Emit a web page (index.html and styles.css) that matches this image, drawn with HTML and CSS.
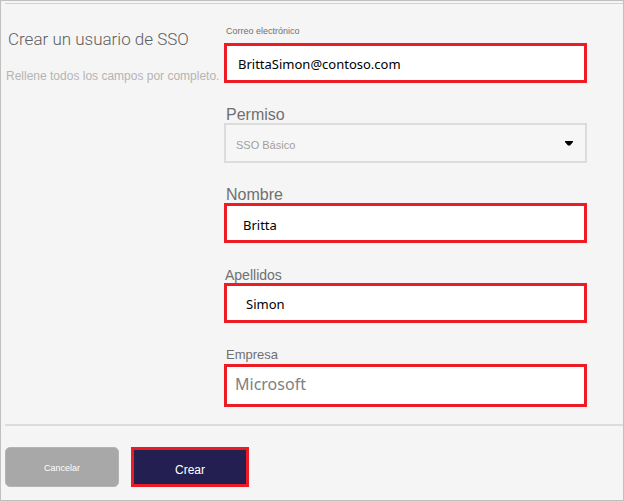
FILE: index.html
```html
<!DOCTYPE html>
<html lang="es">
<head>
<meta charset="utf-8">
<meta name="viewport" content="width=device-width, initial-scale=1">
<title>Crear un usuario de SSO</title>
<link rel="stylesheet" href="styles.css">
</head>
<body>
<form class="panel">
  <div class="content">
    <header class="intro">
      <h1 class="title">Crear un usuario de SSO</h1>
      <p class="hint">Rellene todos los campos por completo.</p>
    </header>
    <div class="fields">
      <div class="field">
        <label class="label label-small" for="email">Correo electrónico</label>
        <input class="control required" id="email" type="email" value="BrittaSimon@contoso.com">
      </div>
      <div class="field">
        <label class="label label-large" for="permission">Permiso</label>
        <div class="select-wrap">
          <select class="control select" id="permission">
            <option>SSO Básico</option>
          </select>
          <svg class="arrow" viewBox="0 0 8 5" aria-hidden="true"><path d="M0 0h8v1L5 4.500H3L0 1z"/></svg>
        </div>
      </div>
      <div class="field">
        <label class="label label-large" for="first-name">Nombre</label>
        <input class="control required name" id="first-name" type="text" value="Britta">
      </div>
      <div class="field">
        <label class="label label-medium" for="last-name">Apellidos</label>
        <input class="control required surname" id="last-name" type="text" value="Simon">
      </div>
      <div class="field">
        <label class="label label-compact" for="company">Empresa</label>
        <input class="control required company" id="company" type="text" value="Microsoft">
      </div>
    </div>
  </div>
  <footer class="actions">
    <button class="button cancel" type="button">Cancelar</button>
    <button class="button create" type="submit">Crear</button>
  </footer>
</form>
</body>
</html>
```
FILE: styles.css
```css
* {
  box-sizing: border-box;
}

body {
  margin: 0;
  background: #f5f5f5;
  font-family: "Liberation Sans", Arial, sans-serif;
  color: #707070;
}

.panel {
  display: flex;
  flex-direction: column;
  min-height: 100vh;
  padding: 2px 0 0 4px;
  border: 1px solid #c0c0c0;
}

.content {
  display: grid;
  grid-template-columns: 219px 1fr;
  padding: 19px 36px 17px 0;
  border-top: 1px solid #d3d3d3;
  border-bottom: 2px solid #dcdcdc;
}

.intro {
  white-space: nowrap;
}

.title {
  margin: 6px 0 0 3px;
  font-family: Roboto, "Liberation Sans", sans-serif;
  font-size: 17px;
  font-weight: 300;
  line-height: 20px;
  color: #606060;
}

.hint {
  margin: 17px 0 0 1px;
  font-size: 12px;
  line-height: 20px;
  color: #b4b4b4;
}

.fields {
  display: grid;
  gap: 20px;
}

.field {
  display: flex;
  flex-direction: column;
}

.label {
  padding: 4px 0 0 2px;
  line-height: 16px;
}

.label-small {
  padding: 0 0 4px 2px;
  font-size: 9px;
}

.label-compact {
  padding-bottom: 1px;
  font-size: 13px;
}

.label-medium {
  padding-left: 1px;
  font-size: 14px;
}

.label-large {
  font-size: 16px;
}

.control {
  display: block;
  width: 100%;
  height: 40px;
  margin: 0;
  border-radius: 0;
  outline: none;
}

.required {
  padding: 1px 11px 0;
  border: 3px solid #ed1c24;
  background: #fff;
  color: #000;
  font-family: "Noto Sans", "Open Sans", sans-serif;
  font-size: 13px;
}

.name {
  padding: 3px 16px 0;
}

.surname {
  padding: 2px 19px 0;
}

.company {
  height: 43px;
  padding: 0 8px 3px;
  color: #808080;
  font-size: 16px;
}

.select-wrap {
  position: relative;
}

.select {
  appearance: none;
  padding: 3px 30px 0 10px;
  border: 2px solid #dcdcdc;
  background: #f6f6f6;
  color: #a0a0a0;
  font-family: inherit;
  font-size: 11px;
}

.arrow {
  position: absolute;
  top: 18px;
  right: 14px;
  width: 8px;
  height: 5px;
  pointer-events: none;
}

.actions {
  display: flex;
  gap: 12px;
  padding-top: 21px;
}

.button {
  height: 40px;
  padding: 2px 0 0;
  color: #fff;
  font-family: inherit;
}

.cancel {
  width: 114px;
  border: 1px solid #b4b4b4;
  border-radius: 5px;
  background: #a8a8a8;
  font-size: 9px;
}

.create {
  width: 118px;
  padding-top: 6px;
  border: 3px solid #ed1c24;
  background: #231f50;
  font-size: 12px;
}
```
